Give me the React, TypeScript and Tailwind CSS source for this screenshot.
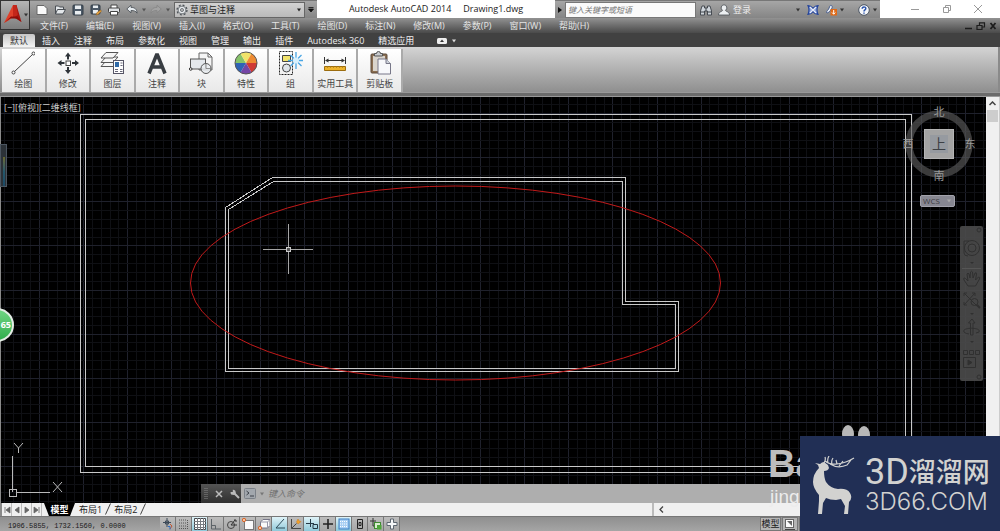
import { useState, type ReactNode } from "react";
import clsx from "clsx";

const MENUS = [
  "文件(F)",
  "编辑(E)",
  "视图(V)",
  "插入(I)",
  "格式(O)",
  "工具(T)",
  "绘图(D)",
  "标注(N)",
  "修改(M)",
  "参数(P)",
  "窗口(W)",
  "帮助(H)",
];

const TABS = [
  "默认",
  "插入",
  "注释",
  "布局",
  "参数化",
  "视图",
  "管理",
  "输出",
  "插件",
  "Autodesk 360",
  "精选应用",
];

type IconProps = { children: ReactNode; className?: string; box?: string };

function Icon({ children, className, box = "0 0 12 12" }: IconProps) {
  return (
    <svg
      viewBox={box}
      className={clsx("shrink-0", className ?? "h-3 w-3")}
      fill="none"
      aria-hidden="true"
    >
      {children}
    </svg>
  );
}

function Caret({ className }: { className?: string }) {
  return (
    <Icon box="0 0 6 4" className={clsx("h-1 w-1.5", className)}>
      <path d="M1 .5h4L3 3.5z" fill="currentColor" />
    </Icon>
  );
}

/* ---------- quick access toolbar ---------- */

const quickTools = [
  {
    name: "新建",
    icon: <path d="M1 1.500h7l3 3v6H1z" fill="#fafafa" stroke="#666" />,
  },
  {
    name: "打开",
    icon: (
      <path
        d="M1.500 10V2h3l1 1h4v2.500M1.500 10l2-4.500h8L9 10z"
        fill="#e3e7ea"
        stroke="#4a4f55"
      />
    ),
  },
  {
    name: "保存",
    icon: (
      <>
        <rect x="1" y="1" width="10" height="10" rx="1" fill="#4d5a68" stroke="#333c46" />
        <path d="M3 1.500h6V5H3zM3 7h6v3.500H3z" fill="#e9edf0" />
      </>
    ),
  },
  {
    name: "另存为",
    icon: (
      <>
        <rect x="1" y="1" width="9" height="9" rx="1" fill="#4d5a68" stroke="#333c46" />
        <path d="M3 1.500h5V4H3zM3 6h5v3.500H3z" fill="#e9edf0" />
        <path d="m6 11 1-2.500L10.500 6l1 1.200L8 10.500z" fill="#e8a33d" stroke="#8a5a1c" strokeWidth=".5" />
      </>
    ),
  },
  {
    name: "打印",
    icon: (
      <>
        <path d="M3 4V1h6v3" fill="#fff" stroke="#444" />
        <rect x=".5" y="4" width="11" height="4.500" rx="1" fill="#e0e3e6" stroke="#444" />
        <path d="M2.500 7.500h7V11h-7z" fill="#fff" stroke="#444" />
      </>
    ),
  },
];

function UndoArrow({ redo }: { redo?: boolean }) {
  return (
    <Icon className={clsx("h-3 w-3", redo && "-scale-x-100")}>
      <path
        d="M.8 5 5 1.200v2.200c3.500 0 6 1.600 6 5.800-1-2-2.800-2.800-6-2.700v2.300z"
        fill={redo ? "#a2a2a2" : "#e6ebef"}
        stroke={redo ? "#858585" : "#454b52"}
        strokeWidth=".8"
      />
    </Icon>
  );
}

function AppButton() {
  return (
    <button
      aria-label="应用程序菜单"
      className="flex h-[30px] w-[30px] shrink-0 items-center justify-between border border-[#333] bg-linear-to-b from-[#b5b5b5] to-[#7d7d7d] px-0.5 text-[#333]"
    >
      <Icon box="0 0 20 22" className="h-[22px] w-5">
        <path d="M10 1h3.500L18.500 18l-4-2.500L10 13z" fill="#a5140e" />
        <path d="M10 1 1 19l5.500-3L10 12.500 13 10z" fill="#e0402a" />
        <path d="M10 1 13.500 1 14.800 11 10 14z" fill="#c4261a" />
        <path d="M1 19 8 12.500l6.500 0 4 5.500-5-3.500H7z" fill="#8d0d09" />
      </Icon>
      <Caret />
    </button>
  );
}

function TitleBar() {
  return (
    <div className="flex h-[18px] items-stretch bg-white">
      <div className="flex items-center border-t border-[#777] bg-linear-to-b from-[#a6a6a6] to-[#858585] pl-1.5">
        {quickTools.map((t) => (
          <button key={t.name} aria-label={t.name} className="mr-[6px]">
            <Icon>{t.icon}</Icon>
          </button>
        ))}
        <button aria-label="放弃">
          <UndoArrow />
        </button>
        <Caret className="mx-[3px] text-[#555]" />
        <button aria-label="重做">
          <UndoArrow redo />
        </button>
        <Caret className="mx-[3px] text-[#555]" />
        <div className="relative flex h-4 w-[131px] items-center border border-[#666] bg-linear-to-b from-[#d2d2d2] to-[#bababa]">
          <Icon box="0 0 14 14" className="ml-px h-3 w-3">
            <circle cx="7" cy="7" r="5.800" stroke="#4a5056" strokeWidth="1.500" strokeDasharray="2.300 2.250" />
            <circle cx="7" cy="7" r="4.500" stroke="#4a5056" strokeWidth=".8" fill="#e8ebee" />
            <circle cx="7" cy="7" r="1.800" stroke="#4a5056" strokeWidth=".8" fill="#bbb" />
          </Icon>
          <select
            aria-label="工作空间"
            className="h-full flex-1 appearance-none pl-0.5 text-[9px] leading-[14px] text-[#1c1c1c]"
          >
            <option>草图与注释</option>
          </select>
          <Caret className="absolute right-0.5 text-[#222]" />
        </div>
        <button aria-label="自定义快速访问工具栏" className="flex h-full w-3 items-center justify-center text-black">
          <Icon box="0 0 6 6" className="h-1.5 w-1.5">
            <path d="M.5.500h5M.5 2h5L3 5z" stroke="#111" strokeWidth=".8" fill="#111" />
          </Icon>
        </button>
      </div>

      <h1 className="flex flex-1 items-center justify-center gap-3 text-[9px] text-[#222]">
        <span>Autodesk AutoCAD 2014</span>
        <span>Drawing1.dwg</span>
      </h1>

      <div className="flex w-[325px] items-center border-t border-[#777] bg-linear-to-b from-[#a6a6a6] to-[#858585]">
        <button aria-label="展开搜索" className="flex h-full w-[10px] items-center justify-center">
          <Icon box="0 0 4 6" className="h-1.5 w-1">
            <path d="M0 0v6l4-3z" fill="#111" />
          </Icon>
        </button>
        <input
          aria-label="搜索"
          placeholder="键入关键字或短语"
          className="h-4 w-[131px] border border-[#777] bg-[#fafafa] px-0.5 text-[8px] italic placeholder:text-[#777]"
        />
        <button aria-label="查找" className="ml-1">
          <Icon>
            <path
              d="M2 2h2.500v2h3V2H10l1.500 5v4h-4V7h-3v4h-4V7z"
              fill="#cfd5db"
              stroke="#3c4248"
              strokeWidth=".9"
            />
            <path d="M.8 8h3.500M7.700 8h3.500M6 4v3" stroke="#3c4248" />
          </Icon>
        </button>
        <button className="ml-[6px] flex flex-1 items-center gap-[3px] text-[9px] text-[#eee]">
          <Icon>
            <path d="M6 .8a3 3 0 0 1 1.500 5.500c0 1.500 4 1 4 4.700H.5c0-3.700 4-3.200 4-4.700A3 3 0 0 1 6 .8z" fill="#eceff1" stroke="#4a4f54" strokeWidth=".8" />
          </Icon>
          登录
        </button>
        <Caret className="mr-1.5 text-[#333]" />
        <button aria-label="Autodesk Exchange">
          <Icon>
            <path d="M1 1.500q2.500 0 5 3 2.500-3 5-3-2 4.500 0 9-2.500 0-5-3-2.500 3-5 3 2-4.500 0-9z" fill="#8ea5dc" stroke="#24449a" strokeWidth="1.200" />
            <path d="m3 3 6 6M9 3 3 9" stroke="#e8edfa" strokeWidth="1.200" />
          </Icon>
        </button>
        <button aria-label="保持连接" className="ml-1.5">
          <Icon>
            <path d="M1.500 8.500c0-2 2-2 3-5.500s4-1 2 2-4 4.500-5 3.500z" fill="#eef2f8" stroke="#3b5288" strokeWidth=".9" />
            <rect x="5.500" y="5" width="6.500" height="6.500" fill="#e06a17" />
            <path d="M8.700 6v4M7 8.500l1.700 1.700 1.700-1.700" stroke="#fff" strokeWidth="1" />
          </Icon>
        </button>
        <Caret className="mr-[13px] ml-0.5 text-[#333]" />
        <button aria-label="帮助">
          <Icon>
            <circle cx="6" cy="6" r="5.300" fill="#f4f6fa" stroke="#4b5563" />
            <path d="M4.200 4.800c0-2.600 3.700-2.400 3.600-.3C7.800 6 6 5.900 6 7.500M6 8.500v1.300" stroke="#2b55ad" strokeWidth="1.500" />
          </Icon>
        </button>
        <Caret className="mx-0.5 text-[#333]" />
      </div>

      <div className="flex w-[120px] items-center px-[18px] pl-[31px] text-[#999]">
        <button aria-label="最小化" className="mr-auto">
          <Icon box="0 0 8 8" className="h-2 w-2">
            <path d="M0 4.500h8" stroke="currentColor" />
          </Icon>
        </button>
        <button aria-label="还原" className="mr-auto">
          <Icon box="0 0 8 8" className="h-2 w-2">
            <path d="M.5 2.500h5v5h-5zM2.500 2.500v-2h5v5h-2" stroke="currentColor" />
          </Icon>
        </button>
        <button aria-label="关闭">
          <Icon box="0 0 8 8" className="h-2 w-2">
            <path d="m0 0 8 8M8 0 0 8" stroke="currentColor" />
          </Icon>
        </button>
      </div>
    </div>
  );
}

function MenuBar() {
  return (
    <nav className="flex h-[15px] items-center pl-[10px] text-[9px] leading-[14px] text-[#e4e4e4]">
      {MENUS.map((m) => (
        <button key={m} className="mr-[18px] whitespace-nowrap">
          {m}
        </button>
      ))}
      <Icon box="0 0 33 8" className="mr-[3px] ml-auto h-2 w-[33px]">
        <path d="M1 6.500h7" stroke="#1d1d1d" strokeWidth="1.500" />
        <path d="M13 3.500h5v4h-5zM15.500 3V.8h5V5H18" stroke="#1d1d1d" strokeWidth="1.200" />
        <path d="m26.500 1 5 6M31.500 1l-5 6" stroke="#1d1d1d" strokeWidth="1.800" />
      </Icon>
    </nav>
  );
}

/* ---------- ribbon ---------- */

const panels = [
  {
    label: "绘图",
    icon: (
      <>
        <path d="M3 21 22 3" stroke="#444" />
        <circle cx="2.500" cy="21.500" r="1.500" fill="#fff" stroke="#444" />
        <circle cx="22.500" cy="2.500" r="1.500" fill="#fff" stroke="#444" />
      </>
    ),
  },
  {
    label: "修改",
    icon: (
      <>
        <rect x="10" y="10" width="4.500" height="4.500" fill="#fff" stroke="#444" />
        <path d="M12 8.500V4M12 16v4.500M8.500 12H4M16 12h4.500" stroke="#2e3338" strokeWidth="2" />
        <path d="m12 1.500 3 4H9zM12 23l3-4H9zM1.500 12l4-3v6zM23 12l-4-3v6z" fill="#2e3338" />
      </>
    ),
  },
  {
    label: "图层",
    icon: (
      <>
        <path d="M1 15.500 6 10h12l-5 5.500z" fill="#f6f6f6" stroke="#555" />
        <path d="M1 11.500 6 6h12l-5 5.500z" fill="#f6f6f6" stroke="#555" />
        <path d="M1 7 6 1.500h12L13 7z" fill="#f6f6f6" stroke="#555" />
        <rect x="13.500" y="9.500" width="10" height="13" fill="#fff" stroke="#556" />
        <rect x="15" y="11" width="4" height="5" fill="#2f6aa8" />
        <path d="M20.500 12h2M20.500 14.500h2M15 18.500h3M20 18.500h2.500M15 20.500h3M20 20.500h2.500" stroke="#667" />
      </>
    ),
  },
  {
    label: "注释",
    icon: <path d="M4 22.500 11.500 4h1L20 22.500M7.500 16h9" stroke="#383d42" strokeWidth="3.500" />,
  },
  {
    label: "块",
    icon: (
      <>
        <path d="M10 15V2h9l4 4v13H10z" fill="#f5f5f5" stroke="#666" />
        <path d="M19 2v4h4" stroke="#666" />
        <rect x="1.500" y="8" width="15" height="10" fill="#e4e8ec" stroke="#555" />
        <circle cx="17" cy="17.500" r="5" fill="#e8ebee" fillOpacity=".85" stroke="#555" />
        <path d="M17 12.500v5h5" stroke="#777" strokeWidth=".8" />
        <circle cx="1.700" cy="18" r="1.300" fill="#fff" stroke="#333" />
      </>
    ),
  },
  {
    label: "特性",
    icon: (
      <>
        <path d="M12 12 1 12A11 11 0 0 1 6.500 2.500z" fill="#86c36a" />
        <path d="M12 12 6.500 2.500a11 11 0 0 1 11 0z" fill="#f0e36a" />
        <path d="M12 12 17.500 2.500A11 11 0 0 1 23 12z" fill="#ee8b32" />
        <path d="M12 12H23a11 11 0 0 1-5.500 9.500z" fill="#cf3a34" />
        <path d="m12 12 5.500 9.500a11 11 0 0 1-11 0z" fill="#7445a5" />
        <path d="M12 12 6.500 21.500A11 11 0 0 1 1 12z" fill="#2f63b5" />
        <circle cx="12" cy="12" r="11" stroke="#555" />
      </>
    ),
  },
  {
    label: "组",
    icon: (
      <>
        <rect x=".5" y=".5" width="13" height="23" stroke="#222" strokeDasharray="2 1" />
        <path d="M3.500 4.500h8v6h-8z" fill="#f3e46c" stroke="#444" />
        <circle cx="7.500" cy="17" r="4" fill="#dfe5ea" stroke="#444" />
        <path d="M17 1v17M9 9.500h15M11.500 4l11 11M22.500 4l-11 11" stroke="#4aa6e4" strokeWidth="1.300" />
        <circle cx="17" cy="9.500" r="3" fill="#d7f0fd" />
      </>
    ),
  },
  {
    label: "实用工具",
    icon: (
      <>
        <path d="M1.500 6v7M22.500 6v7M3 9.500h18" stroke="#333" />
        <path d="m2 9.500 3.500-2v4zM22 9.500l-3.500-2v4z" fill="#333" />
        <path d="M1.500 15.500h21v4h-21z" fill="#edb32c" stroke="#9c6d10" />
        <path d="M4.500 15v2M7.500 15v2M10.500 15v2M13.500 15v2M16.500 15v2M19.500 15v2" stroke="#a57a1c" strokeWidth=".7" />
      </>
    ),
  },
  {
    label: "剪贴板",
    icon: (
      <>
        <rect x="3" y="3" width="16" height="19" rx="1" fill="#8b6f52" stroke="#5d4b3a" />
        <rect x="5" y="5" width="12" height="15" fill="#d9d4cc" />
        <path d="M6.500 5V2.500h2a2 2 0 0 1 4 0h2V5z" fill="#c9ccd0" stroke="#555" />
        <path d="M10 8h8l4.500 4.500V23H10z" fill="#f7f8fb" stroke="#778" />
        <path d="M18 8v4.500h4.500" fill="#cdd3dc" stroke="#778" />
      </>
    ),
  },
];

function Ribbon() {
  const [tab, setTab] = useState(TABS[0]);
  return (
    <>
      <div role="tablist" className="flex h-[14px] items-end bg-[#414141] pl-[3px] text-[9px] leading-3 text-[#ededed]">
        {TABS.map((t) => (
          <button
            key={t}
            role="tab"
            aria-selected={t === tab}
            onClick={() => setTab(t)}
            className={clsx(
              "h-[13px] px-[7px] whitespace-nowrap",
              t === tab && "rounded-t-xs bg-linear-to-b from-[#c6c6c6] to-[#f4f4f4] text-[#333]",
            )}
          >
            {t}
          </button>
        ))}
        <button aria-label="最小化功能区" className="ml-4 flex h-3 items-center gap-1 text-[#ddd]">
          <Icon box="0 0 10 6" className="h-1.5 w-2.5">
            <rect width="10" height="6" rx="1.500" fill="#eee" />
            <path d="M3 4h4L5 1.500z" fill="#333" />
          </Icon>
          <Caret />
        </button>
      </div>
      <div className="h-[45px] border-r-2 border-[#8a8a8a] bg-linear-to-b from-[#d4d4d4] to-[#8f8f8f] pt-0.5">
        <div className="grid h-[43px] w-[403px] grid-cols-9 pl-0.5">
          {panels.map((p) => (
            <button
              key={p.label}
              className="flex flex-col items-center justify-between border-r-2 border-[#aaa] bg-linear-to-b from-white to-[#e9e9e9] pt-0.5 pb-0.5 text-[9px] leading-[13px] whitespace-nowrap text-[#444]"
            >
              <Icon box="0 0 24 24" className="h-6 w-6">
                {p.icon}
              </Icon>
              {p.label}
            </button>
          ))}
        </div>
      </div>
      <div className="h-[5px] border-y border-[#999] bg-[#6b6b6b]" />
    </>
  );
}

/* ---------- model space ---------- */

const GRID = 44.1;

function gridLines(origin: number, count: number) {
  return Array.from({ length: count }, (_, i) => ({
    at: Math.round(origin + (i * GRID) / 5) + 0.5,
    major: i % 5 === 0,
  }));
}

// major lines last so they stay on top of the minor ones
const byWeight = (a: { major: boolean }, b: { major: boolean }) => Number(a.major) - Number(b.major);
const columns = gridLines(-5, 120).sort(byWeight);
const rows = gridLines(-28, 60).sort(byWeight);

function Drawing() {
  return (
    <svg className="absolute inset-0 h-full w-full" fill="none" shapeRendering="crispEdges" aria-label="Drawing1">
      {columns.map((l) => (
        <line key={l.at} x1={l.at} x2={l.at} y1="0" y2="100%" stroke={l.major ? "#1f212c" : "#0f1014"} />
      ))}
      {rows.map((l) => (
        <line key={l.at} x1="0" x2="100%" y1={l.at} y2={l.at} stroke={l.major ? "#1f212c" : "#0f1014"} />
      ))}
      <g stroke="#c9c9c9">
        <rect x="80.500" y="17.500" width="831" height="358" />
        <rect x="85.500" y="22.500" width="820" height="347" />
        <path d="M225.500 110.500 272.500 80.500H625.500V204.500H678.500V274.500H225.500z" />
        <path d="M228.500 112.500 273.500 84.500H622.500V207.500H675.500V271.500H228.500z" />
        <path d="M263 152.500h50M288.500 127v50" stroke="#a5a5a5" />
        <rect x="286.500" y="150.500" width="4" height="4" fill="#555" />
      </g>
      <ellipse cx="455.500" cy="186" rx="265" ry="97" stroke="#c21a1a" shapeRendering="auto" />
      {/* UCS icon */}
      <g stroke="#b9b9b9">
        <path d="M12.500 359v36M16 395.500h34M9.500 392.500h7v7h-7z" />
        <path d="m14 346 4.500 5 4.500-5M18.500 351v5M53 385l9 10M62 385l-9 10" shapeRendering="auto" />
      </g>
    </svg>
  );
}

function ViewCube() {
  return (
    <div className="absolute top-[7px] right-[10px] w-[74px] text-[11px] leading-3 text-[#999]">
      <div className="relative grid h-20 grid-cols-[12px_1fr_12px] grid-rows-[16px_1fr_16px] place-items-center">
        <svg viewBox="0 0 74 80" className="absolute inset-0 h-20 w-[74px]" fill="none" aria-hidden="true">
          <circle cx="37" cy="40" r="30" stroke="#5b5b5b" strokeOpacity=".65" strokeWidth="7" />
        </svg>
        <button className="relative col-start-2 row-start-1">北</button>
        <button className="relative col-start-1 row-start-2">西</button>
        <button className="relative col-start-2 row-start-2 flex h-[30px] w-[30px] items-center justify-center border border-[#b5b5b5] bg-[#a3a3a3]">
          <span className="flex h-[18px] w-[18px] items-center justify-center bg-[#969aa0] text-[14px] text-[#3d4045]">上</span>
        </button>
        <button className="relative col-start-3 row-start-2">东</button>
        <button className="relative col-start-2 row-start-3">南</button>
      </div>
      <button className="mt-[11px] ml-[18px] flex h-3 w-[35px] items-center justify-between rounded-xs border border-[#a2a2ab] bg-[#878791] px-0.5 text-[8px] text-[#3c3c42]">
        WCS
        <Caret className="text-[#aaa]" />
      </button>
    </div>
  );
}

function NavBar() {
  return (
    <div className="absolute top-[129px] right-[3px] rounded-xs bg-[#4b4b4b]/90">
      <Icon box="0 0 23 155" className="h-[155px] w-[23px]">
        <g stroke="#303030">
          <circle cx="19" cy="4" r="2" />
          <circle cx="12" cy="22" r="7.500" />
          <circle cx="12" cy="22" r="4" />
          <path d="M4 15h5M4 15v12q0 3 4 3" />
          <path d="M2 42.500h19" stroke="#555" />
          <path d="M8 60 4 54q-1-3 1.500-1.500L8 55l-1-7q1-2 2 0l1 4 .5-6q1-1.500 2 0l.5 6 2-5q1.500-1 1.500 1l-1 6 3-3q2 0 1 2l-4 7z" />
          <path d="m4 67 13 13M15 67 4 79M4 70v-3h3M12 67h3v3M4 76v3h3" />
          <circle cx="14.500" cy="76" r="3.500" />
          <path d="m17 79 3 3" strokeWidth="2" />
          <path d="M10.500 109V97h-2L12 93l3 4h-2v12zM4 106c-3-5 18-5 15 0l-3 1M4 106q2 2 5 2" />
          <path d="M3.500 124.500h4v4h-4zM9.500 124.500h4v4h-4zM15.500 124.500h4v4h-4zM3.500 131.500h12v10h-12z" />
          <path d="m8 134 4 2.500-4 2.500z" fill="#303030" />
          <circle cx="19" cy="151" r="2" />
        </g>
        <path d="M10 36h4l-2 2zM10 87h4l-2 2zM10 115h4l-2 2z" fill="#303030" />
      </Icon>
    </div>
  );
}

function CommandLine() {
  return (
    <div className="absolute right-[3px] bottom-0 left-[201px] flex h-[19px] items-stretch">
      <div className="flex w-10 items-center gap-[7px] bg-linear-to-b from-[#555] to-[#2f2f2f] pl-[3px]">
        <Icon box="0 0 4 12" className="h-3 w-1">
          <path d="M1 0v12M3 0v12" stroke="#888" strokeDasharray="1 1" />
        </Icon>
        <Icon box="0 0 8 8" className="h-2 w-2">
          <path d="m1 1 6 6M7 1 1 7" stroke="#bbb" strokeWidth="1.500" />
        </Icon>
        <Icon box="0 0 10 10" className="h-2.5 w-2.5">
          <path d="m4 4 5 5" stroke="#bbb" strokeWidth="2" />
          <path d="M2.800.7v2.200H.6a2.600 2.600 0 1 0 2.200-2.200z" fill="#bbb" />
        </Icon>
      </div>
      <label className="flex flex-1 items-center gap-[3px] bg-[#aeaeae] pl-[3px] text-[#777]">
        <Icon box="0 0 12 11" className="h-[11px] w-3">
          <rect x=".5" y=".5" width="11" height="10" rx="1" fill="#a2a7ad" stroke="#7b8087" />
          <path d="m2.500 3 2.500 2-2.500 2M6 8h4" stroke="#3c4148" />
        </Icon>
        <Caret />
        <input
          aria-label="命令"
          placeholder="键入命令"
          className="min-w-0 flex-1 text-[9px] italic placeholder:text-[#707070]"
        />
      </label>
    </div>
  );
}

function Viewport() {
  return (
    <main className="relative flex min-h-0 flex-1 bg-[#f0f0f0]">
      <div className="relative flex-1 overflow-hidden bg-black">
        <Drawing />
        <div className="absolute inset-y-0 left-0 w-px bg-[#8a8a8a]" />
        <p className="absolute top-1 left-1 text-[9px] leading-[13px] text-[#ccc]">[−][俯视][二维线框]</p>

        {/* docked palette */}
        <div className="absolute top-[47px] left-0 h-[43px] w-[7px] border border-[#4b5560] bg-[#2c3238] px-px pt-3">
          <div className="ml-px h-full w-0.5 bg-linear-to-b from-[#6b692c] via-[#24586c] to-[#1c4a66]" />
        </div>
        <div className="absolute top-[211px] -left-5 flex h-[34px] w-[34px] items-center justify-end rounded-full border-2 border-[#e3ece4] bg-linear-to-b from-[#6fd583] to-[#2fae4c] pr-px text-[9px] font-bold text-white">
          65
        </div>

        <ViewCube />
        <NavBar />
        <CommandLine />
      </div>
      <div className="flex w-[14px] flex-col items-center border-r border-[#ccc] bg-[#f0f0f0]">
        <Icon box="0 0 7 5" className="my-1 h-[5px] w-[7px]">
          <path d="m.5 4 3-3 3 3" stroke="#444" strokeWidth="1.500" />
        </Icon>
        <div className="h-3 w-[11px] bg-[#cdcdcd]" />
      </div>
    </main>
  );
}

/* ---------- bottom bars ---------- */

function LayoutTabs() {
  return (
    <div className="flex h-[13px] items-stretch border-l-2 border-[#8a8a8a] bg-[#f0f0f0] text-[9px] leading-[13px] text-[#222]">
      {["M3 2v6M8 2v6L4 5z", "M7 2v6L3 5z", "M3 2v6l4-3z", "M7 2v6M2 2v6l4-3z"].map((d) => (
        <button key={d} aria-label="滚动布局" className="flex w-[10px] items-center justify-center border-r border-[#bbb]">
          <Icon box="0 0 10 10" className="h-2.5 w-2.5">
            <path d={d} fill="#666" stroke="#666" strokeWidth=".8" />
          </Icon>
        </button>
      ))}
      <button className="ml-[2px] w-[31px] bg-black font-bold text-white [clip-path:polygon(0_0,100%_0,84%_100%,16%_100%)]">
        模型
      </button>
      <button className="ml-1">布局1</button>
      <Icon box="0 0 6 11" className="mx-[3px] h-3 w-1.5">
        <path d="M5.500 0 .5 11" stroke="#444" />
      </Icon>
      <button>布局2</button>
      <Icon box="0 0 6 11" className="mx-[3px] h-3 w-1.5">
        <path d="M5.500 0 .5 11" stroke="#444" />
      </Icon>
      <div className="ml-auto flex w-[348px] items-center border-l-2 border-[#bbb]">
        <Icon box="0 0 5 7" className="ml-[5px] h-[7px] w-[5px]">
          <path d="m4 .5-3 3 3 3" stroke="#444" strokeWidth="1.300" />
        </Icon>
      </div>
    </div>
  );
}

const toggles = [
  {
    name: "推断约束",
    icon: (
      <>
        <path d="M5 0v9M1 4.500h8M3.500 3h3v3h-3z" stroke="#3d4a58" />
        <path d="m8 6 2 2-2 3" stroke="#c2552f" />
        <path d="M6 8.500h2v3" stroke="#2f6cc2" />
      </>
    ),
  },
  { name: "捕捉模式", icon: <path d="M1 2h7M1 5h7M1 8h7M9.500 2v9M1 10.500h8" stroke="#555" strokeDasharray="1 1" /> },
  {
    name: "栅格显示",
    on: true,
    icon: (
      <>
        <path d="M.5.500h11v11H.5z" fill="#fff" />
        <path d="M.5.500h11v11H.5z" stroke="#44484d" />
        <path d="M3.500 0v12M6.500 0v12M9.500 0v12M0 3.500h12M0 6.500h12M0 9.500h12" stroke="#777b80" />
      </>
    ),
  },
  { name: "正交模式", icon: <path d="M1.500 1v10H11M1.500 7.500h4V11" stroke="#5d6368" /> },
  {
    name: "极轴追踪",
    icon: (
      <>
        <circle cx="5" cy="7" r="3.500" stroke="#444" />
        <path d="M5 7h6M5 7l4-5M8 2h2v2" stroke="#333" />
      </>
    ),
  },
  {
    name: "对象捕捉",
    icon: (
      <>
        <rect x="2.500" y="2.500" width="9" height="9" fill="#fafafa" stroke="#777" />
        <circle cx="2" cy="2" r="1.700" fill="#f5c4a2" stroke="#d8662a" />
      </>
    ),
  },
  {
    name: "三维对象捕捉",
    icon: (
      <>
        <path d="M2.500 4 5 1.500h7v6L9.500 10h-7z" fill="#fafafa" stroke="#778" />
        <path d="M2.500 4h7v6M9.500 4 12 1.500" stroke="#99a" />
        <circle cx="2" cy="10" r="1.700" fill="#f5c4a2" stroke="#d8662a" />
      </>
    ),
  },
  { name: "对象捕捉追踪", on: true, icon: <path d="M10 1 2 10h9" stroke="#2d4a58" /> },
  {
    name: "动态 UCS",
    icon: (
      <>
        <path d="M1.500 1v9.500H11M1.500 10.500l5-5" stroke="#444" />
        <path d="m8 1 1 2 2 .5-1.500 1.500L8 6 6.500 4z" fill="#f1a02d" stroke="#c97a12" strokeWidth=".5" />
      </>
    ),
  },
  { name: "动态输入", on: true, icon: <path d="M4.500 1v8M0 5.500h8M7 6.500h4.500v4H7z" stroke="#243845" /> },
  { name: "线宽", icon: <path d="M6 1v10M1 6h10" stroke="#222" strokeWidth="1.600" /> },
  {
    name: "透明度",
    on: true,
    icon: (
      <>
        <rect x="1" y="1" width="10" height="10" fill="#a9cff3" stroke="#3b7fc4" />
        <path d="M2 3.500h8M2 6h8M2 8.500h8" stroke="#fff" strokeDasharray="1 1" />
      </>
    ),
  },
  { name: "快捷特性", icon: <path d="M3.500 1.500h5v9h-5zM5 4.500h2v3H5z" stroke="#222" /> },
  {
    name: "选择循环",
    icon: (
      <>
        <path d="M3 0v6M0 3h6M3 6v2h3" stroke="#333" />
        <rect x="4.500" y="4.500" width="6" height="6" fill="#d9edd0" stroke="#3f8a31" />
        <rect x="7" y="7" width="4.500" height="4.500" fill="#4ea63a" />
      </>
    ),
  },
  {
    name: "注释监视器",
    icon: <path d="M4.500 1h3v3.500H11v3H7.500V11h-3V7.500H1v-3h3.500z" fill="#f6f7f8" stroke="#5d6670" />,
  },
];

function StatusBar() {
  return (
    <footer className="flex h-[15px] items-center border-t border-[#777] bg-linear-to-b from-[#8f8f8f] to-[#a5a5a5]">
      <output className="w-40 pt-1 pl-2 font-['Liberation_Mono',monospace] text-[7px] leading-[9px] whitespace-nowrap text-[#1a1a1a]">
        1906.5855, 1732.1560, 0.0000
      </output>
      {toggles.map((t) => (
        <button
          key={t.name}
          aria-label={t.name}
          aria-pressed={!!t.on}
          className={clsx(
            "flex h-[14px] w-4 items-center justify-center border-r border-[#777]",
            t.on ? "bg-linear-to-b from-[#dff3f8] to-[#8fc9da]" : "bg-linear-to-b from-[#bdbdbd] to-[#a6a6a6]",
          )}
        >
          <Icon>{t.icon}</Icon>
        </button>
      ))}
      <div className="ml-auto flex h-[14px] w-60 items-stretch gap-px text-[9px] leading-[14px] text-[#1a1a1a]">
        <button className="w-[21px] border border-[#777] bg-[#b5b5b5] leading-3">模型</button>
        <button aria-label="快速查看布局" className="flex w-4 items-center justify-center border border-[#777] bg-[#b5b5b5]">
          <Icon>
            <rect x="1.500" y="1.500" width="8" height="8" fill="#fafafa" stroke="#666" />
            <path d="m3 3 5 5V3z" fill="#666" />
            <path d="M1 11.500h10" stroke="#444" />
          </Icon>
        </button>
        <div className="flex-1 border-l border-[#777] bg-[#b5b5b5]" />
      </div>
    </footer>
  );
}

/* ---------- watermarks ---------- */

function Watermark() {
  return (
    <div aria-hidden="true" className="absolute right-0 bottom-0 h-[106px] w-[232px]">
      <svg viewBox="0 0 32 18" className="ml-[73px] h-[18px] w-8">
        <ellipse cx="7" cy="9" rx="6" ry="9" fill="#b8b8b8" />
        <ellipse cx="23" cy="10" rx="6" ry="9" fill="#b8b8b8" />
      </svg>
      <div className="w-8 overflow-hidden font-['Liberation_Sans',sans-serif]">
        <p className="text-[38px] leading-[42px] font-bold text-[#bdbdbd]">Ba</p>
        <p className="pl-0.5 text-[19px] leading-6 text-[#ececec]">jing</p>
      </div>
    </div>
  );
}

function SiteBadge() {
  return (
    <div className="absolute right-0 bottom-0 flex h-[95px] w-[200px] items-center bg-[#212f55] pt-0.5 pl-3 text-[#d2d2d0]">
      <Icon box="0 0 44 58" className="h-[58px] w-11">
        <path
          d="M3 7 8 8q2-2 4-2l4 3 1 3q-1 3-5 3 0 7 2 11 4 6 12 7 9-1 12 4 3 5-1 9l-1 12h-4l1-8-4-7-5 1q-6 0-10-2l-3 5-1 11H6l1-13 0-6q-6-7-6-13 0-8 6-14l-1-3z"
          fill="currentColor"
        />
        <path
          d="M12 7q2-3 1-6M13 5q5 4 12 3 9-1 17-6M16 7q-1-4 1-7M20 8q-1-3 1-6M25 8l-1-4M18 8q8 5 17 1l4-5M27 10l4-5"
          stroke="currentColor"
          strokeWidth="1.200"
        />
      </Icon>
      <div className="ml-[9px] whitespace-nowrap">
        <p className="flex items-center leading-8">
          <span className="font-['Roboto',sans-serif] text-[36px]">3D</span>
          <span className="text-[27px] font-medium">溜溜网</span>
        </p>
        <p className="mt-0.5 font-['Inter',sans-serif] text-[24px] leading-6 font-light">3D66.COM</p>
      </div>
    </div>
  );
}

export default function App() {
  return (
    <div className="relative flex h-screen flex-col overflow-hidden font-['Open_Sans','Noto_Sans_CJK_SC',sans-serif] select-none">
      <header className="flex items-start bg-linear-to-b from-[#9a9a9a] from-50% to-[#4a4a4a]">
        <AppButton />
        <div className="min-w-0 flex-1">
          <TitleBar />
          <MenuBar />
        </div>
      </header>
      <Ribbon />
      <Viewport />
      <LayoutTabs />
      <StatusBar />
      <Watermark />
      <SiteBadge />
    </div>
  );
}
